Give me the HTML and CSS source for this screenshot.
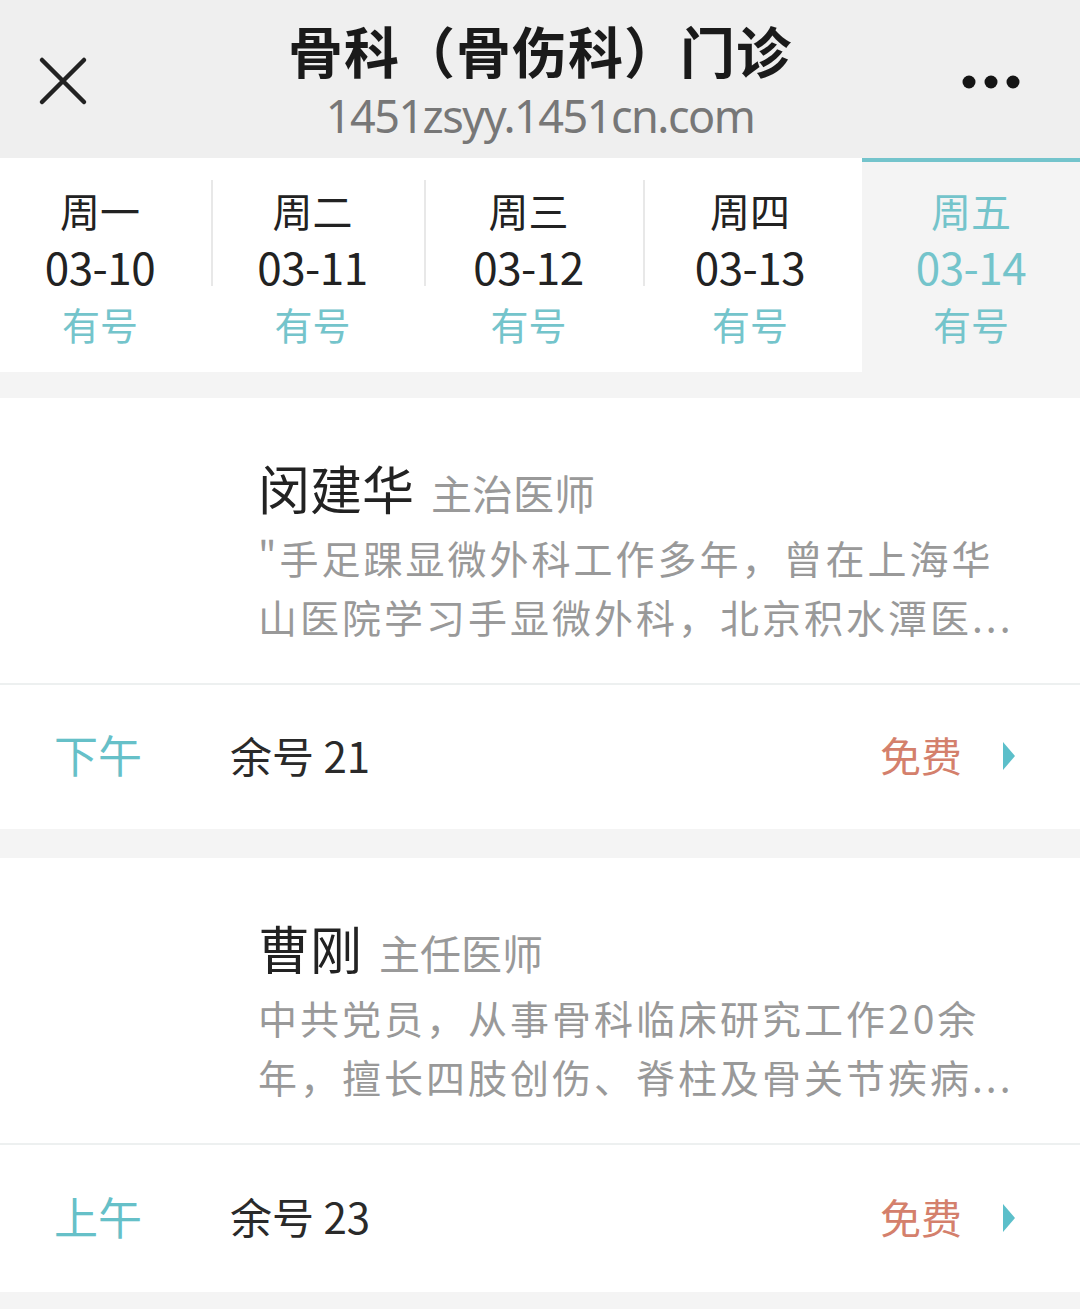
FILE: index.html
```html
<!DOCTYPE html>
<html lang="zh-CN">
<head>
<meta charset="utf-8">
<title>骨科（骨伤科）门诊</title>
<link rel="stylesheet" href="styles.css">
</head>
<body>
<div class="page">
  <header class="topbar">
    <svg class="close" width="50" height="50" viewBox="0 0 50 50"><path d="M4 4 L46 46 M46 4 L4 46" stroke="#222" stroke-width="4.5" stroke-linecap="round" fill="none"/></svg>
    <div class="titles">
      <h1 class="title">骨科（骨伤科）门诊</h1>
      <div class="url">1451zsyy.1451cn.com</div>
    </div>
    <svg class="more" width="60" height="16" viewBox="0 0 60 16"><circle cx="7" cy="8" r="6.5" fill="#151515"/><circle cx="29" cy="8" r="6.5" fill="#151515"/><circle cx="51" cy="8" r="6.5" fill="#151515"/></svg>
  </header>

  <nav class="days">
    <div class="day"><div class="wd">周一</div><div class="date">03-10</div><div class="avail">有号</div></div>
    <div class="day"><div class="wd">周二</div><div class="date">03-11</div><div class="avail">有号</div></div>
    <div class="day"><div class="wd">周三</div><div class="date">03-12</div><div class="avail">有号</div></div>
    <div class="day"><div class="wd">周四</div><div class="date">03-13</div><div class="avail">有号</div></div>
    <div class="day active"><div class="wd">周五</div><div class="date">03-14</div><div class="avail">有号</div></div>
  </nav>

  <section class="card">
    <div class="info">
      <div class="name-line"><span class="name">闵建华</span><span class="rank">主治医师</span></div>
      <div class="desc">
        <span class="line">"手足踝显微外科工作多年，曾在上海华</span>
        <span class="line">山医院学习手显微外科，北京积水潭医...</span>
      </div>
    </div>
    <div class="slot">
      <span class="period">下午</span>
      <span class="left">余号 21</span>
      <span class="fee">免费</span>
      <svg class="arrow" width="14" height="28" viewBox="0 0 14 28"><path d="M1 0 L13 14 L1 28 Z" fill="#5cbfca"/></svg>
    </div>
  </section>

  <section class="card">
    <div class="info">
      <div class="name-line"><span class="name">曹刚</span><span class="rank">主任医师</span></div>
      <div class="desc">
        <span class="line">中共党员，从事骨科临床研究工作20余</span>
        <span class="line">年，擅长四肢创伤、脊柱及骨关节疾病...</span>
      </div>
    </div>
    <div class="slot">
      <span class="period">上午</span>
      <span class="left">余号 23</span>
      <span class="fee">免费</span>
      <svg class="arrow" width="14" height="28" viewBox="0 0 14 28"><path d="M1 0 L13 14 L1 28 Z" fill="#5cbfca"/></svg>
    </div>
  </section>
</div>
</body>
</html>
```

FILE: styles.css
```css
* { box-sizing: border-box; }
html, body { margin: 0; padding: 0; }
body {
  background: #f4f4f4;
  font-family: "Noto Sans CJK SC", "Noto Sans", sans-serif;
  color: #333;
  width: 1080px;
  height: 1309px;
  overflow: hidden;
}
.page { display: flex; flex-direction: column; }

.topbar {
  height: 158px;
  background: #efefef;
  display: grid;
  grid-template-columns: 1fr auto 1fr;
  align-items: center;
  padding: 0 38px;
}
.close { justify-self: start; margin-top: 4px; }
.more { justify-self: end; margin-top: 6px; margin-right: 20px; }
.titles {
  align-self: start;
  display: flex;
  flex-direction: column;
  align-items: center;
  padding-top: 17px;
}
.title {
  margin: 0;
  font-size: 55px;
  line-height: 64px;
  font-weight: 700;
  color: #1a1a1a;
  letter-spacing: 1px;
}
.url {
  margin-top: 6px;
  font-family: "Noto Sans", "Open Sans", sans-serif;
  font-size: 45px;
  line-height: 58px;
  color: #777;
  letter-spacing: -1.5px;
}

.days {
  display: grid;
  grid-template-columns: 212px 213px 219px 218px 1fr;
  background: #fff;
  height: 214px;
}
.day {
  position: relative;
  display: flex;
  flex-direction: column;
  align-items: center;
  padding-top: 20px;
  padding-right: 12px;
  border-top: 4px solid transparent;
}
.day:nth-child(4) { padding-right: 6px; }
.day:nth-child(-n+3)::after {
  content: "";
  position: absolute;
  right: -1px;
  top: 18px;
  width: 2px;
  height: 106px;
  background: #e8e8e8;
}
.wd { font-size: 40px; line-height: 56px; color: #222; }
.date { font-size: 44px; line-height: 56px; color: #222; letter-spacing: -0.5px; }
.avail { font-size: 38px; line-height: 60px; color: #74c4cb; }
.day.active { background: #f4f4f4; border-top-color: #74c4cc; padding-right: 0; }
.day.active .wd, .day.active .date { color: #74c4cb; }

.card {
  background: #fff;
  margin-top: 26px;
}
.card + .card { margin-top: 29px; }
.info {
  padding: 60px 40px 37px 258px;
}
.name-line { display: flex; align-items: baseline; height: 60px; line-height: 60px; }
.name { font-size: 52px; color: #222; }
.rank { font-size: 41px; color: #999; margin-left: 17px; }
.desc { margin-top: 10px; font-size: 39px; line-height: 59px; color: #999; letter-spacing: 3px; }
.desc .line { display: block; white-space: nowrap; }

.slot {
  border-top: 2px solid #edf0f0;
  height: 146px;
  display: flex;
  align-items: center;
  padding: 0 64px 6px 54px;
}
.card + .card .slot { height: 149px; }
.period { font-size: 44px; color: #66c0c8; width: 176px; }
.left { font-size: 42px; color: #2a2a2a; flex: 1; }
.fee { font-size: 41px; color: #d4806c; margin-right: 40px; }
.arrow { display: block; margin-top: 4px; }
```
